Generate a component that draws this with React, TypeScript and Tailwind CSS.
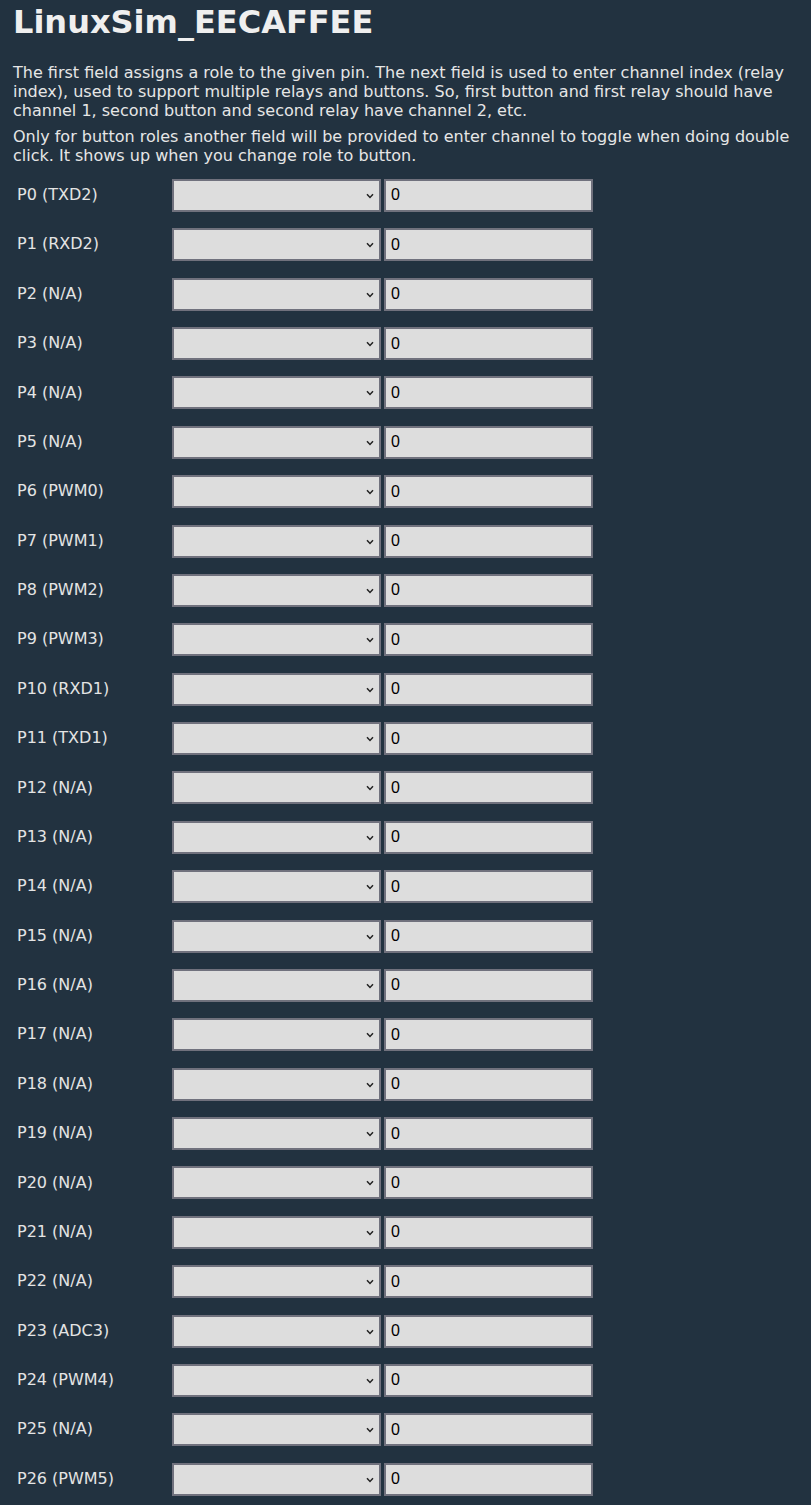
import React from "react";

const pins = [
  "P0 (TXD2)", "P1 (RXD2)", "P2 (N/A)", "P3 (N/A)", "P4 (N/A)", "P5 (N/A)",
  "P6 (PWM0)", "P7 (PWM1)", "P8 (PWM2)", "P9 (PWM3)", "P10 (RXD1)", "P11 (TXD1)",
  "P12 (N/A)", "P13 (N/A)", "P14 (N/A)", "P15 (N/A)", "P16 (N/A)", "P17 (N/A)",
  "P18 (N/A)", "P19 (N/A)", "P20 (N/A)", "P21 (N/A)", "P22 (N/A)", "P23 (ADC3)",
  "P24 (PWM4)", "P25 (N/A)", "P26 (PWM5)",
];

function Row({ label }: { label: string }) {
  return (
    <div className="flex items-center h-[49.38px]">
      <div className="w-[159px] pl-[4px] text-[16px] leading-[18.6px] text-[#e4e4e4]">{label}</div>
      <div className="relative w-[209px] h-[33px] border-2 border-[#70717d] bg-[#dddddd]">
        <select className="w-full h-full appearance-none bg-transparent outline-none" defaultValue="">
          <option value=""></option>
        </select>
        <svg className="absolute right-[5px] top-[12px] pointer-events-none" width="8" height="6" viewBox="0 0 8 6">
          <path d="M1 1.2 L4 4.4 L7 1.2" fill="none" stroke="#222" strokeWidth="1.5" />
        </svg>
      </div>
      <div className="ml-[3px] w-[209px] h-[33px] border-2 border-[#70717d] bg-[#dddddd] flex items-center">
        <input
          className="w-full h-full bg-transparent outline-none pl-[5px] text-[16px] text-black font-['Liberation_Sans',sans-serif]"
          defaultValue="0"
        />
      </div>
    </div>
  );
}

export default function App() {
  return (
    <div className="min-h-screen bg-[#223240] text-[#e6e6e6] font-['DejaVu_Sans',sans-serif] px-[13px] pb-[10px]">
      <h1 className="pt-[4.2px] text-[32px] leading-[37.25px] font-bold text-[#efefef]">LinuxSim_EECAFFEE</h1>
      <p className="mt-[23px] text-[16px] leading-[18.6px]">
        The first field assigns a role to the given pin. The next field is used to enter channel index (relay index), used to support multiple relays and buttons. So, first button and first relay should have channel 1, second button and second relay have channel 2, etc.
      </p>
      <p className="mt-[7.7px] text-[16px] leading-[18.6px]">
        Only for button roles another field will be provided to enter channel to toggle when doing double click. It shows up when you change role to button.
      </p>
      <div className="mt-[5.6px]">
        {pins.map((p) => (
          <Row key={p} label={p} />
        ))}
      </div>
    </div>
  );
}
